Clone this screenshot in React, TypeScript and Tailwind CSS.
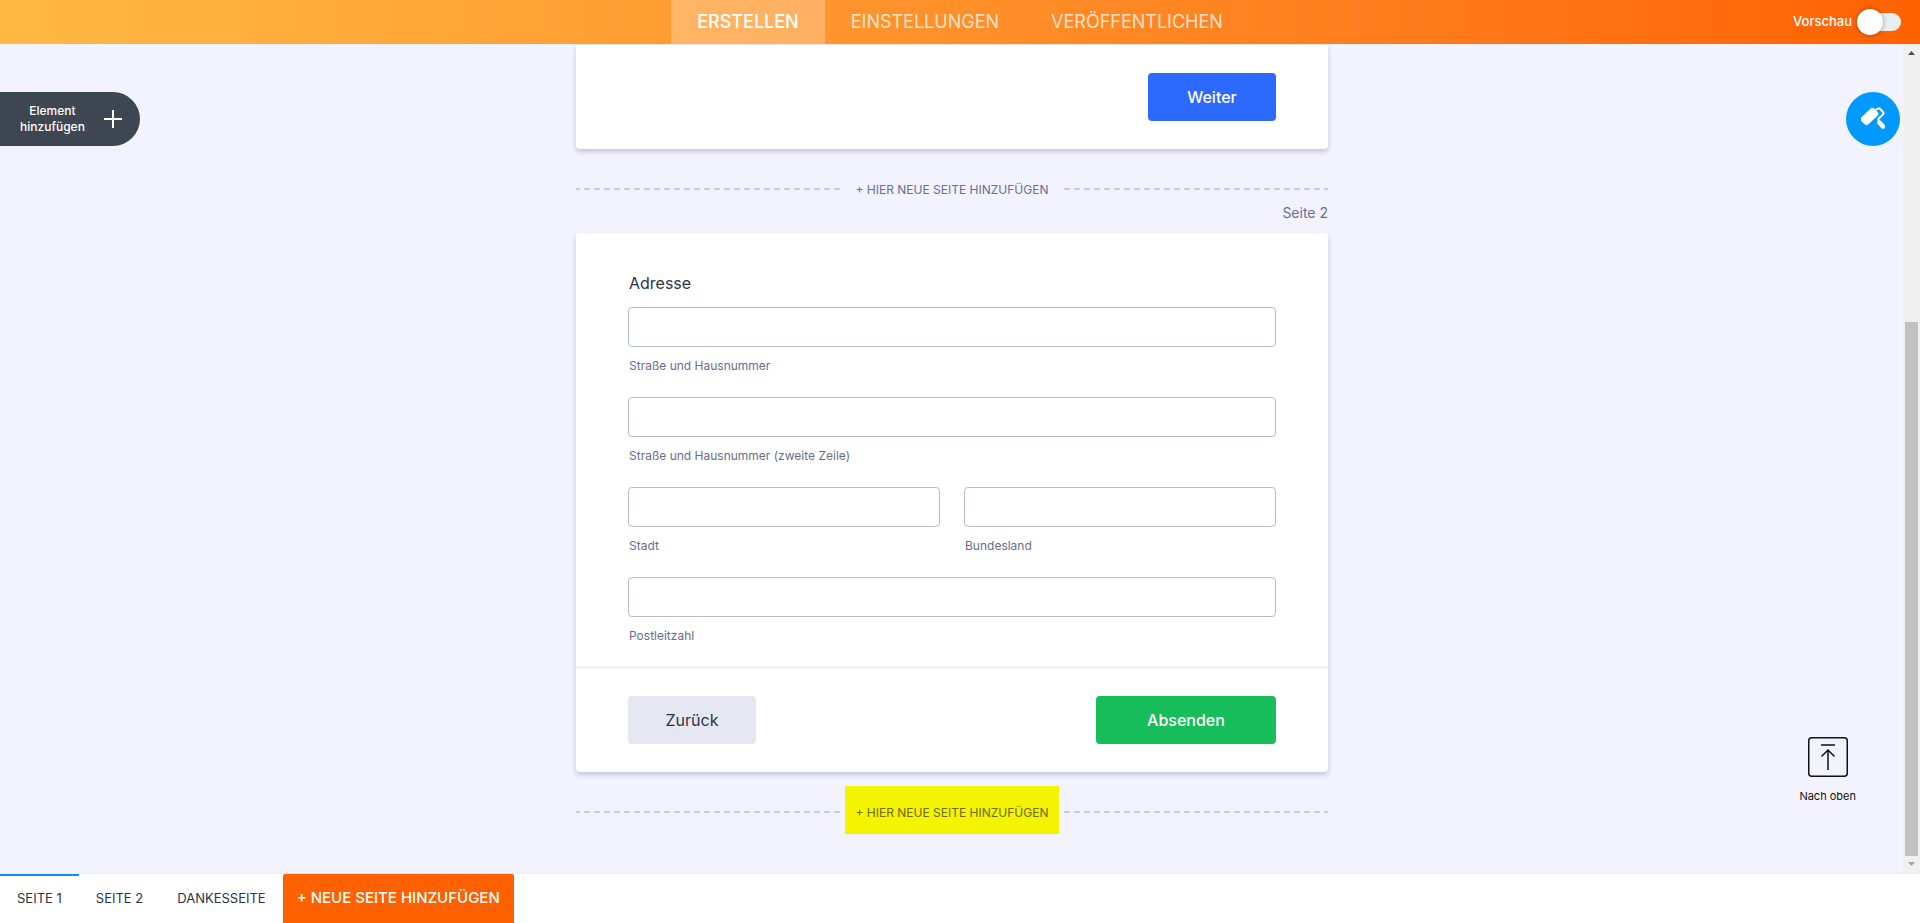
import React from 'react';

const NAV_ITEMS = ['ERSTELLEN', 'EINSTELLUNGEN', 'VERÖFFENTLICHEN'];
const PAGE_TABS = ['SEITE 1', 'SEITE 2', 'DANKESSEITE'];

const PaintRollerIcon = () => (
  <svg className="h-6 w-6" viewBox="0 0 24 24" fill="none" aria-hidden="true">
    <rect x="-0.5" y="4.5" width="18" height="10" rx="3" fill="#fff" transform="rotate(-43 8.5 9.5)" />
    <path
      d="M15.5 2.4L17 1.6Q18.2 1 19.2 2L22 5Q23 6.2 22 7.4L18 11.2Q17 12.4 17.6 14"
      stroke="#fff"
      strokeWidth="2"
      strokeLinecap="round"
    />
    <path d="M18.4 15.6L22 19.6" stroke="#fff" strokeWidth="4.5" strokeLinecap="round" />
  </svg>
);

const Header = () => (
  <header className="grid h-11 shrink-0 grid-cols-[1fr_auto_1fr] bg-linear-to-r from-[#ffb942] to-[#ff6100]">
    <nav className="col-start-2 flex">
      {NAV_ITEMS.map((item, i) => (
        <a
          key={item}
          href="#"
          className={`flex items-center px-[26px] text-lg ${
            i === 0 ? 'bg-white/25 font-medium text-white' : 'text-white/75'
          }`}
        >
          {item}
        </a>
      ))}
    </nav>
    <label className="flex items-center justify-end gap-[5px] pr-[19px] text-[13px] font-medium text-white">
      Vorschau
      <span className="relative flex h-[26px] w-11 items-center justify-end">
        <input type="checkbox" role="switch" className="h-[18px] w-9 appearance-none rounded-full bg-[#e6eeee]" />
        <span className="absolute left-0 h-[26px] w-[26px] rounded-full bg-white shadow-[0_0_5px_rgba(0,0,0,0.35)]" />
      </span>
    </label>
  </header>
);

interface FieldProps {
  id: string;
  label: string;
  className?: string;
}

const Field: React.FC<FieldProps> = ({ id, label, className = '' }) => (
  <div className={`flex flex-col gap-[10px] ${className}`}>
    <input id={id} type="text" className="h-10 w-full rounded border border-[#b8bbca] bg-white px-2" />
    <label htmlFor={id} className="px-px text-xs leading-[18px] text-[#6a6d8a]">
      {label}
    </label>
  </div>
);

const CardFooter: React.FC<{ children: React.ReactNode }> = ({ children }) => (
  <div className="flex border-t border-[#e3e5f1] px-[52px] py-7">{children}</div>
);

const AddPageRow: React.FC<{ highlighted?: boolean }> = ({ highlighted = false }) => (
  <div className="mt-[14px] flex h-12 items-center gap-[5px]">
    <div className="mt-1 h-0.5 flex-1 bg-[repeating-linear-gradient(to_left,#c6ccee_0px,#c6ccee_6px,transparent_6px,transparent_10px)]" />
    <button
      type="button"
      className={`h-12 w-[214px] pt-1.5 text-xs ${highlighted ? 'bg-[#f4f400] text-[#6b6b0c]' : 'text-[#6a6d9a]'}`}
    >
      + HIER NEUE SEITE HINZUFÜGEN
    </button>
    <div className="mt-1 h-0.5 flex-1 bg-[repeating-linear-gradient(to_right,#c6ccee_0px,#c6ccee_6px,transparent_6px,transparent_10px)]" />
  </div>
);

const Scrollbar = () => (
  <div className="flex w-[17px] shrink-0 flex-col items-center bg-[#f0f0f0]">
    <svg className="h-[17px] w-[17px] shrink-0" viewBox="0 0 17 17" aria-hidden="true">
      <path d="M5 11L8.5 7L12 11Z" fill="#505050" />
    </svg>
    <div className="flex-[261]" />
    <div className="w-[13px] flex-[534] bg-[#c1c1c1]" />
    <svg className="h-[17px] w-[17px] shrink-0" viewBox="0 0 17 17" aria-hidden="true">
      <path d="M5 6L8.5 10L12 6Z" fill="#a3a3a3" />
    </svg>
  </div>
);

const FormPages = () => (
  <div className="mx-auto w-full max-w-[752px]">
    <section className="rounded-b bg-white shadow-[0_3px_5px_rgba(84,95,140,0.3)]">
      <CardFooter>
        <button type="button" className="ml-auto h-12 w-32 rounded bg-[#2c69ff] font-medium text-white">
          Weiter
        </button>
      </CardFooter>
    </section>

    <AddPageRow />
    <h2 className="-mt-2 mb-[10px] text-right text-sm leading-5 text-[#6a6d9a]">Seite 2</h2>

    <section className="rounded bg-white shadow-[0_3px_5px_rgba(84,95,140,0.3)]">
      <fieldset className="px-[52px] pt-[38px] pb-[22px]">
        <legend className="contents">
          <span className="mb-3 block px-px leading-6 text-[#2c3345]">Adresse</span>
        </legend>
        <div className="grid grid-cols-2 gap-x-6 gap-y-[22px]">
          <Field id="street" label="Straße und Hausnummer" className="col-span-2" />
          <Field id="street2" label="Straße und Hausnummer (zweite Zeile)" className="col-span-2" />
          <Field id="city" label="Stadt" />
          <Field id="state" label="Bundesland" />
          <Field id="zip" label="Postleitzahl" className="col-span-2" />
        </div>
      </fieldset>
      <CardFooter>
        <button type="button" className="h-12 w-32 rounded bg-[#e5e7f2] text-[#2c3345]">
          Zurück
        </button>
        <button type="submit" className="ml-auto h-12 w-[180px] rounded bg-[#18bd5b] font-medium text-white">
          Absenden
        </button>
      </CardFooter>
    </section>

    <AddPageRow highlighted />
  </div>
);

const PageTabs = () => (
  <footer className="flex h-[50px] shrink-0 border-t border-[#ececf0] bg-white">
    {PAGE_TABS.map((tab, i) => (
      <button
        key={tab}
        type="button"
        className={`border-y-2 border-b-transparent px-[17px] text-[13px] text-[#2c3345] ${
          i === 0 ? 'border-t-[#0a93e2]' : 'border-t-transparent'
        }`}
      >
        {tab}
      </button>
    ))}
    <button type="button" className="rounded-t-xs bg-[#ff6100] px-[14px] text-[15px] font-medium text-white">
      + NEUE SEITE HINZUFÜGEN
    </button>
  </footer>
);

export default function App() {
  return (
    <div className="flex h-screen flex-col overflow-hidden bg-[#f3f3fe] font-['Inter',sans-serif]">
      <Header />
      <main className="relative flex min-h-0 flex-1">
        <div className="flex-1 overflow-hidden pl-px">
          <FormPages />
        </div>
        <Scrollbar />

        <button
          type="button"
          className="absolute top-12 left-0 flex h-[54px] w-[140px] items-center gap-[19px] rounded-r-full bg-[#3e4652] pl-5 text-xs font-medium text-white"
        >
          <span>
            Element
            <br />
            hinzufügen
          </span>
          <svg className="h-[18px] w-[18px] shrink-0" viewBox="0 0 18 18" aria-hidden="true">
            <path d="M9 0.5V17.5M0.5 9H17.5" stroke="#fff" strokeWidth="2" strokeLinecap="round" />
          </svg>
        </button>

        <button
          type="button"
          aria-label="Formular-Designer"
          className="absolute top-12 right-5 flex h-[54px] w-[54px] items-center justify-center rounded-full bg-[#0099ff]"
        >
          <PaintRollerIcon />
        </button>

        <button
          type="button"
          className="absolute right-16 bottom-[69px] flex flex-col items-center gap-[11px] text-[11px] leading-4 text-[#111]"
        >
          <svg className="h-10 w-10" viewBox="0 0 40 40" fill="none" stroke="#111" aria-hidden="true">
            <rect x="0.75" y="0.75" width="38.5" height="38.5" rx="3" strokeWidth="1.5" />
            <path d="M13 8H27M20 33V13M13.5 19.5L20 13L26.5 19.5" strokeWidth="1.5" />
          </svg>
          Nach oben
        </button>
      </main>
      <PageTabs />
    </div>
  );
}
